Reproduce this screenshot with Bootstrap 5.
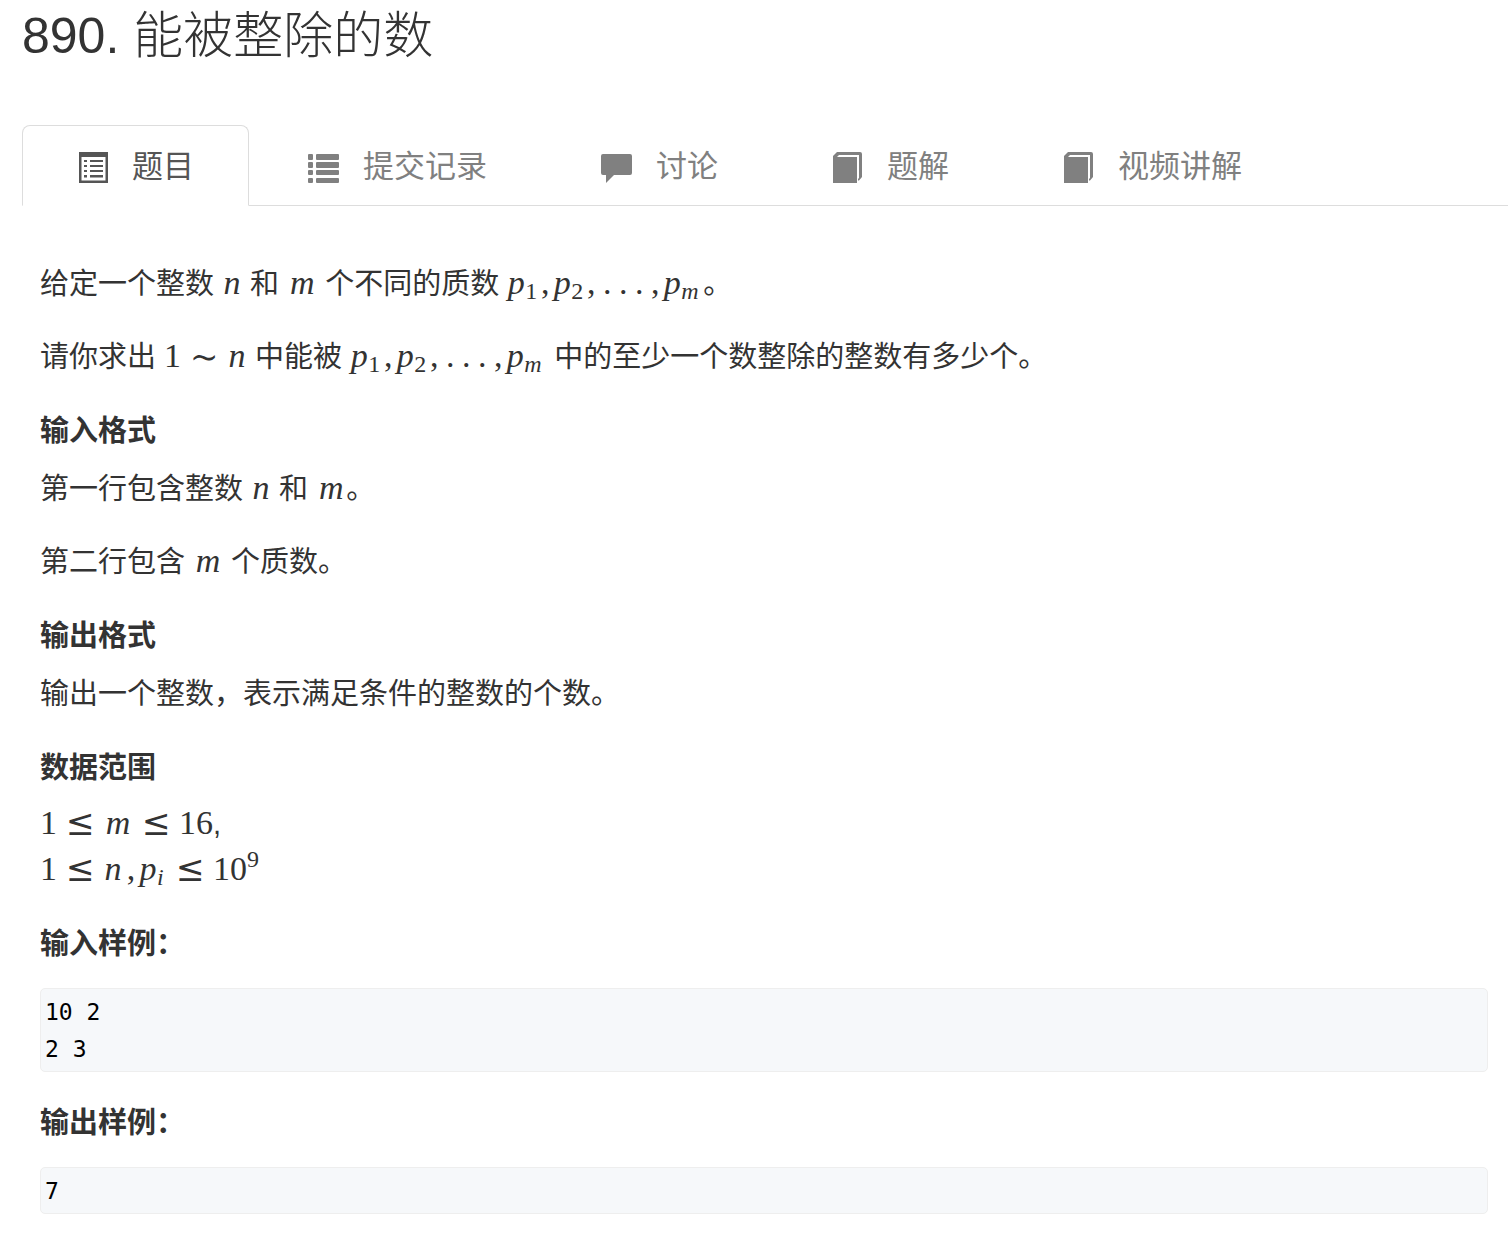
<!DOCTYPE html>
<html lang="zh-CN">
<head>
<meta charset="utf-8">
<meta name="viewport" content="width=device-width, initial-scale=1">
<title>890. 能被整除的数</title>
<link href="https://cdn.jsdelivr.net/npm/bootstrap@5.3.0/dist/css/bootstrap.min.css" rel="stylesheet">
<style>
  body { font-family: "Liberation Sans", "Noto Sans CJK SC", sans-serif; font-size: 29px; line-height: 46px; color: #333; background: #fff; }
  .problem-page { padding-left: 22px; }
  .problem-title { font-size: 50px; line-height: 56px; font-weight: 300; margin: 8px 0 61px; }
  .problem-tabs { --bs-nav-tabs-border-color: #ddd; --bs-nav-tabs-border-radius: 8px; gap: 4px; flex-wrap: nowrap; }
  .problem-tabs .nav-link { display: flex; align-items: center; gap: 24px; padding: 17px 54px 15px; font-size: 31px; line-height: 47px; color: #808080; white-space: nowrap; }
  .problem-tabs .nav-link.active { color: #555; border-color: #ddd #ddd #fff; }
  .tab-icon { width: 31px; height: 32px; margin-top: 2px; flex: none; fill: currentColor; }
  .statement { padding: 55px 20px 20px 18px; }
  .statement p { margin: 0 0 27px; }
  .statement h2 { font-size: 29px; line-height: 32px; font-weight: 700; margin: 35px 0 19px; }
  .statement .sample { margin: 28px 0 35px; padding: 5px 4px 3px; border: 1px solid #eee; border-radius: 5px; background: #f6f8fa; color: #000; font: 23px/37px "DejaVu Sans Mono", "Liberation Mono", monospace; }
  .statement .bounds { margin-top: -2px; }
  .tex { font-family: "Liberation Serif", serif; font-size: 34px; line-height: 1px; white-space: nowrap; }
  .tex var, .tex .punct, .tex .rel { display: inline-block; text-align: center; }
  .tex var { width: 20px; }
  .tex .wide { width: 30px; }
  .tex .slim { width: 18px; }
  .tex .punct { width: 16px; }
  .tex .rel { width: 46px; font-family: "DejaVu Math TeX Gyre", "DejaVu Serif", serif; }
  .tex sub, .tex sup { font-size: 24px; line-height: 1px; }
  .tex sub var { width: 22px; text-align: left; }
  .tex sub .slim { width: 10px; }
  .tex sub { bottom: -5px; }
  .tex sup { top: -13px; }
</style>
<script src="https://cdn.jsdelivr.net/npm/bootstrap@5.3.0/dist/js/bootstrap.bundle.min.js" defer></script>
</head>
<body>
<main class="problem-page">
  <h1 class="problem-title">890. 能被整除的数</h1>

  <ul class="nav nav-tabs problem-tabs">
    <li class="nav-item"><a class="nav-link active" aria-current="page" href="#problem">
      <svg class="tab-icon" viewBox="0 0 31 32" aria-hidden="true"><path fill-rule="evenodd" d="M2 0H31V31H2ZM4.500 5V28.500H28.500V5Z"/><path d="M7 8h3v2H7zM13 8h13v2H13zM7 13h3v2H7zM13 13h13v2H13zM7 18h3v2H7zM13 18h13v2H13zM7 23h3v2.500H7zM13 23h13v2.500H13z"/></svg>
      <span>题目</span></a></li>
    <li class="nav-item"><a class="nav-link" href="#submissions">
      <svg class="tab-icon" viewBox="0 0 31 32" aria-hidden="true"><rect y="2" width="5" height="6" rx="1"/><rect x="8" y="2" width="23" height="6" rx="1"/><rect y="10" width="5" height="6" rx="1"/><rect x="8" y="10" width="23" height="6" rx="1"/><rect y="18" width="5" height="5" rx="1"/><rect x="8" y="18" width="23" height="5" rx="1"/><rect y="26" width="5" height="5" rx="1"/><rect x="8" y="26" width="23" height="5" rx="1"/></svg>
      <span>提交记录</span></a></li>
    <li class="nav-item"><a class="nav-link" href="#discussion">
      <svg class="tab-icon" viewBox="0 0 31 32" aria-hidden="true"><path d="M2 2H29Q31 2 31 4V21Q31 23 29 23H13L5 31V23H2Q0 23 0 21V4Q0 2 2 2Z"/></svg>
      <span>讨论</span></a></li>
    <li class="nav-item"><a class="nav-link" href="#solutions">
      <svg class="tab-icon" viewBox="0 0 31 32" aria-hidden="true"><path d="M1 4L5 0H28Q30 0 30 2V25L27 28.500H26V27L27 26V3H7L5 5H25V31H1Z"/></svg>
      <span>题解</span></a></li>
    <li class="nav-item"><a class="nav-link" href="#videos">
      <svg class="tab-icon" viewBox="0 0 31 32" aria-hidden="true"><path d="M1 4L5 0H28Q30 0 30 2V25L27 28.500H26V27L27 26V3H7L5 5H25V31H1Z"/></svg>
      <span>视频讲解</span></a></li>
  </ul>

  <article class="statement" id="problem">
    <p>给定一个整数 <span class="tex"><var>n</var></span> 和 <span class="tex"><var class="wide">m</var></span> 个不同的质数 <span class="tex"><var class="slim">p</var><sub>1</sub><span class="punct">,</span><var class="slim">p</var><sub>2</sub><span class="punct">,</span><span class="punct">.</span><span class="punct">.</span><span class="punct">.</span><span class="punct">,</span><var class="slim">p</var><sub><var>m</var></sub></span>。</p>
    <p>请你求出 <span class="tex">1<span class="rel">∼</span><var>n</var></span> 中能被 <span class="tex"><var class="slim">p</var><sub>1</sub><span class="punct">,</span><var class="slim">p</var><sub>2</sub><span class="punct">,</span><span class="punct">.</span><span class="punct">.</span><span class="punct">.</span><span class="punct">,</span><var class="slim">p</var><sub><var>m</var></sub></span> 中的至少一个数整除的整数有多少个。</p>

    <h2>输入格式</h2>
    <p>第一行包含整数 <span class="tex"><var>n</var></span> 和 <span class="tex"><var class="wide">m</var></span>。</p>
    <p>第二行包含 <span class="tex"><var class="wide">m</var></span> 个质数。</p>

    <h2>输出格式</h2>
    <p>输出一个整数，表示满足条件的整数的个数。</p>

    <h2>数据范围</h2>
    <p class="bounds"><span class="tex">1<span class="rel">≤</span><var class="wide">m</var><span class="rel">≤</span>16</span>,<br>
    <span class="tex">1<span class="rel">≤</span><var>n</var><span class="punct">,</span><var class="slim">p</var><sub><var class="slim">i</var></sub><span class="rel">≤</span>10<sup>9</sup></span></p>

    <h2>输入样例：</h2>
    <pre class="sample">10 2
2 3</pre>

    <h2>输出样例：</h2>
    <pre class="sample">7</pre>
  </article>
</main>
</body>
</html>
